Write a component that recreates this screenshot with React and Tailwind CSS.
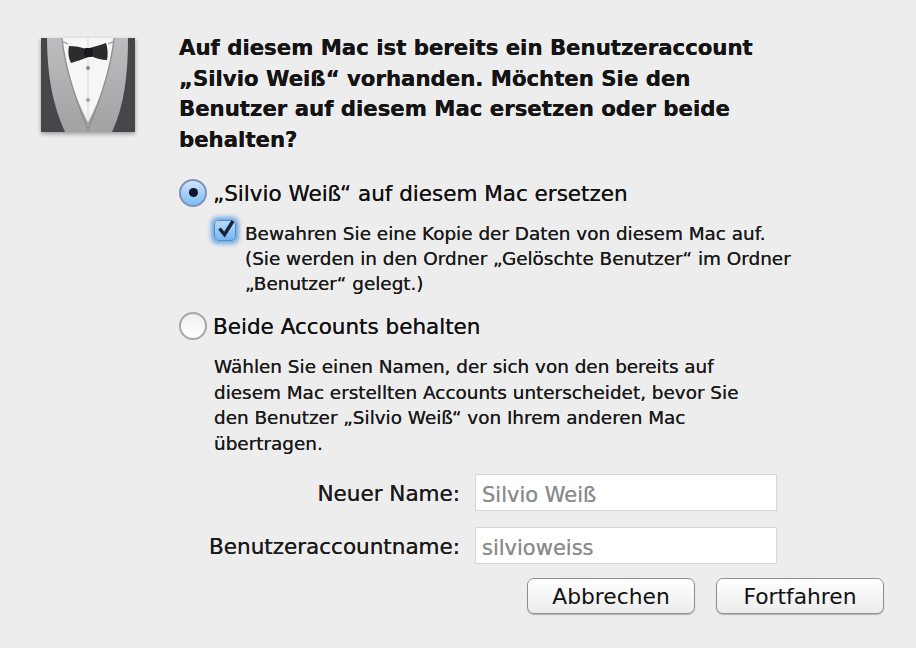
import React from 'react';

const font = { fontFamily: '"DejaVu Sans", sans-serif' };

const TuxedoIcon = () => (
  <svg width="94" height="94" viewBox="0 0 94 94" className="block drop-shadow-[0_2px_2px_rgba(0,0,0,0.35)]">
    <defs>
      <linearGradient id="lapel" x1="0" y1="0" x2="0" y2="1">
        <stop offset="0" stopColor="#bdbdbf" />
        <stop offset="1" stopColor="#a2a2a4" />
      </linearGradient>
    </defs>
    <rect width="94" height="94" fill="#47474b" />
    <path d="M6 0 L87 0 C87 38 83 68 71 94 L24 94 C12 68 6 38 6 0 Z" fill="url(#lapel)" />
    <path d="M21 0 L73 0 C70 30 60 60 47 84 C34 60 24 30 21 0 Z" fill="#f6f6f6" />
    <path d="M21 0 C24 30 34 60 46.5 90 M73 0 C70 30 60 60 47.5 90" stroke="#8a8a8d" strokeWidth="1.2" fill="none" />
    <path d="M47 90 V94" stroke="#8a8a8d" strokeWidth="1" />
    <path d="M47 0 V80" stroke="#d8d8d8" strokeWidth="1" />
    <path d="M21 3 L27 6 M73 3 L67 6" stroke="#9a9a9a" strokeWidth="1.2" />
    <path d="M28 8 C34 8 40 9 45 11 C52 9 60 7 65 5 C67 11 67 18 66 22 C60 22 54 20 50 18 C45 20 37 23 30 25 C27 19 27 13 28 8 Z" fill="#2c2c2e" />
    <rect x="43" y="10" width="9" height="9" rx="2" fill="#18181a" />
    <circle cx="47" cy="30" r="2" fill="#8a8a8a" />
    <circle cx="47" cy="62" r="2" fill="#a0a0a0" />
  </svg>
);

const Radio = ({ checked }) => (
  <span
    className={`flex h-[28px] w-[28px] shrink-0 items-center justify-center rounded-full border-2 ${
      checked
        ? 'border-[#7f93bd] bg-gradient-to-b from-[#cfe4fa] to-[#7dbcf2]'
        : 'border-[#a8a8a8] bg-gradient-to-b from-[#f0f0f0] to-[#ffffff]'
    }`}
  >
    {checked && <span className="h-[9px] w-[9px] rounded-full bg-[#10162a]" />}
  </span>
);

const Checkbox = () => (
  <span className="flex h-[21px] w-[22px] shrink-0 items-center justify-center rounded-[4px] border border-[#4d8fd0] bg-gradient-to-b from-[#b9d9f7] to-[#74b6f0] shadow-[0_0_4px_3px_rgba(74,144,220,0.75)]">
    <svg width="24" height="24" viewBox="0 0 24 24" className="-mt-[3px] ml-[2px] shrink-0">
      <path d="M5.5 11.5 L10.5 17.5 L19 4" fill="none" stroke="#16223d" strokeWidth="3.4" />
    </svg>
  </span>
);

const Field = ({ label, value }) => (
  <div className="flex items-center justify-end">
    <label className="mr-[15px] pt-[2px] text-[21.5px] text-[#1a1a1a]">{label}</label>
    <div className="flex h-[37px] w-[302px] items-center border border-[#d6d6d6] bg-white pl-[6px] pt-[6px] text-[21px] text-[#8c8c8c]">
      {value}
    </div>
  </div>
);

const DialogButton = ({ children }) => (
  <button className="h-[36px] w-[168px] rounded-[7px] border border-[#8f8f8f] bg-gradient-to-b from-white to-[#ececec] pt-[1px] text-[21.8px] text-[#111] shadow-[0_1px_1px_rgba(0,0,0,0.25)]">
    {children}
  </button>
);

export default function App() {
  return (
    <div className="flex h-[648px] w-[916px] overflow-hidden bg-[#ededed] text-[#111] [text-shadow:0_0_0.6px_currentColor]" style={font}>
      <div className="ml-[41px] mt-[38px] shrink-0">
        <TuxedoIcon />
      </div>
      <div className="ml-[44px] mt-[33px] w-[737px]">
        <h1 className="text-[21.25px] font-bold leading-[30.6px] text-[#141414]">
          Auf diesem Mac ist bereits ein Benutzeraccount<br />
          „Silvio Weiß“ vorhanden. Möchten Sie den<br />
          Benutzer auf diesem Mac ersetzen oder beide<br />
          behalten?
        </h1>
        <div className="mt-[22.5px] flex items-center">
          <Radio checked />
          <span className="ml-[6px] pt-[2px] text-[21.5px] leading-[28px]">„Silvio Weiß“ auf diesem Mac ersetzen</span>
        </div>
        <div className="ml-[35px] mt-[12px] flex">
          <Checkbox />
          <p className="ml-[9px] pt-[1px] text-[18.4px] leading-[25px] text-[#1a1a1a]">
            Bewahren Sie eine Kopie der Daten von diesem Mac auf.<br />
            (Sie werden in den Ordner „Gelöschte Benutzer“ im Ordner<br />
            „Benutzer“ gelegt.)
          </p>
        </div>
        <div className="mt-[15.5px] flex items-center">
          <Radio />
          <span className="ml-[6px] pt-[2px] text-[21.5px] leading-[28px]">Beide Accounts behalten</span>
        </div>
        <p className="ml-[35px] mt-[13px] text-[18.4px] leading-[25.5px] text-[#1a1a1a]">
          Wählen Sie einen Namen, der sich von den bereits auf<br />
          diesem Mac erstellten Accounts unterscheidet, bevor Sie<br />
          den Benutzer „Silvio Weiß“ von Ihrem anderen Mac<br />
          übertragen.
        </p>
        <div className="mt-[18px] flex w-[598px] flex-col gap-[16px]">
          <Field label="Neuer Name:" value="Silvio Weiß" />
          <Field label="Benutzeraccountname:" value="silvioweiss" />
        </div>
        <div className="mt-[14px] flex w-[705px] justify-end gap-[21px]">
          <DialogButton>Abbrechen</DialogButton>
          <DialogButton>Fortfahren</DialogButton>
        </div>
      </div>
    </div>
  );
}
